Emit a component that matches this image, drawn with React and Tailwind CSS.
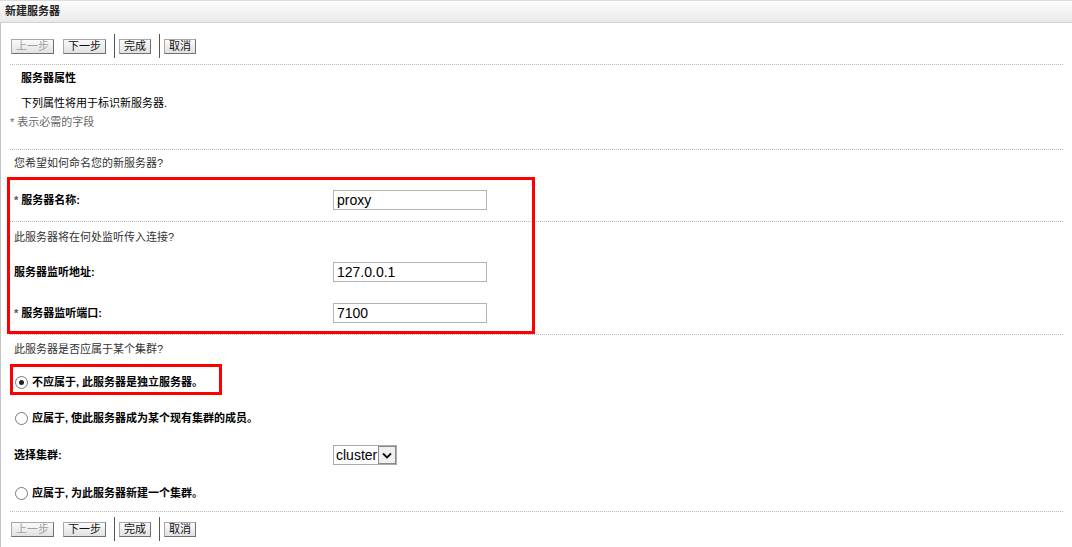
import React from 'react';

const FONT = "font-['Liberation_Sans','Noto_Sans_CJK_SC',sans-serif]";

function Btn({ children, disabled, w }) {
  return (
    <button
      type="button"
      disabled={disabled}
      className={`${w} h-[15px] flex items-center justify-center text-[11px] leading-none border border-[#a8a8a8] border-r-[#707070] border-b-[#707070] bg-gradient-to-b from-[#fafafa] to-[#e2e2e2] ${disabled ? 'text-[#a0a0a0]' : 'text-[#111]'}`}
    >
      {children}
    </button>
  );
}

function Toolbar() {
  return (
    <div className="flex items-center h-[24px] ml-[1px]">
      <Btn w="w-[43px]" disabled>上一步</Btn>
      <div className="ml-[9px]"><Btn w="w-[43px]">下一步</Btn></div>
      <div className="ml-[8px] w-px h-[24px] bg-[#555]" />
      <div className="ml-[4px]"><Btn w="w-[32px]">完成</Btn></div>
      <div className="ml-[8px] w-px h-[24px] bg-[#555]" />
      <div className="ml-[4px]"><Btn w="w-[32px]">取消</Btn></div>
    </div>
  );
}

function Dotted() {
  return <div className="border-t border-dotted border-[#b8b8b8]" />;
}

function TextInput({ value }) {
  return (
    <div className="w-[154px] h-[20px] border border-[#b4b4b4] flex items-center pl-[3px] text-[14px] text-black font-['Liberation_Sans',sans-serif]">
      {value}
    </div>
  );
}

function Radio({ checked, children, h }) {
  return (
    <div className={`${h} flex items-center pl-[5px]`}>
      <span className="w-[13px] h-[13px] rounded-full border border-[#7a7a7a] bg-white flex items-center justify-center">
        {checked && <span className="w-[5px] h-[5px] rounded-full bg-[#222]" />}
      </span>
      <span className="ml-[4px] font-bold text-[11px] text-black">{children}</span>
    </div>
  );
}

export default function App() {
  return (
    <div className={`w-[1072px] h-[547px] bg-white overflow-hidden text-[11px] ${FONT}`}>
      {/* 标题栏 */}
      <div className="h-[23px] border-t border-[#dcdcdc] border-b border-b-[#d2d2d2] bg-gradient-to-b from-[#fdfdfd] to-[#e9e9e9] flex items-center px-[5px] font-bold text-[11px] text-[#222]">
        新建服务器
      </div>

      <div className="relative h-[524px] border-l border-[#c4c4c4]">
        <div className="ml-[9px] mr-[9px]">
          <div className="pt-[11px]"><Toolbar /></div>
          <div className="mt-[6px]"><Dotted /></div>

          {/* 服务器属性 */}
          <div className="h-[26px] flex items-center pl-[11px] font-bold text-black">服务器属性</div>
          <div className="h-[24px] flex items-center pl-[11px] text-black">下列属性将用于标识新服务器.</div>
          <div className="h-[14px] flex items-center text-[#666]">* 表示必需的字段</div>
          <div className="mt-[20px]"><Dotted /></div>

          <div className="h-[26px] flex items-center pl-[4px] text-[#333]">您希望如何命名您的新服务器?</div>
          <div className="grid grid-cols-[319px_1fr] items-center pl-[4px] pt-[14px] pb-[11px]">
            <span className="font-bold text-black"><span className="text-[#555]">*</span> 服务器名称:</span>
            <TextInput value="proxy" />
          </div>
          <Dotted />

          <div className="h-[30px] flex items-center pl-[4px] text-[#333]">此服务器将在何处监听传入连接?</div>
          <div className="grid grid-cols-[319px_1fr] items-center pl-[4px] pt-[10px]">
            <span className="font-bold text-black">服务器监听地址:</span>
            <TextInput value="127.0.0.1" />
          </div>
          <div className="grid grid-cols-[319px_1fr] items-center pl-[4px] pt-[21px] pb-[11px]">
            <span className="font-bold text-black"><span className="text-[#555]">*</span> 服务器监听端口:</span>
            <TextInput value="7100" />
          </div>
          <Dotted />

          <div className="h-[28px] flex items-center pl-[4px] text-[#333]">此服务器是否应属于某个集群?</div>
          <Radio h="h-[38px]" checked>不应属于, 此服务器是独立服务器。</Radio>
          <Radio h="h-[34px]">应属于, 使此服务器成为某个现有集群的成员。</Radio>
          <div className="grid grid-cols-[319px_1fr] items-center pl-[4px] pt-[10px] pb-[10px]">
            <span className="font-bold text-black">选择集群:</span>
            <div className="w-[64px] h-[20px] border border-[#ababab] flex items-center">
              <span className="flex-1 pl-[2px] text-[14px] text-black font-['Liberation_Sans',sans-serif] leading-none">cluster</span>
              <span className="w-[18px] h-[18px] border border-[#8a8a8a] bg-[#efefef] flex items-center justify-center">
                <svg width="10" height="7" viewBox="0 0 10 7">
                  <path d="M1 1.5 L5 5.5 L9 1.5" fill="none" stroke="#111" strokeWidth="1.8" />
                </svg>
              </span>
            </div>
          </div>
          <Radio h="h-[36px]">应属于, 为此服务器新建一个集群。</Radio>
          <Dotted />
          <div className="mt-[5px]"><Toolbar /></div>
        </div>

        {/* 标注红框 */}
        <div className="absolute left-[6px] top-[154px] w-[528px] h-[157px] border-[3px] border-[#ff0000] pointer-events-none" />
        <div className="absolute left-[9px] top-[341px] w-[212px] h-[31px] border-[3px] border-[#ff0000] pointer-events-none" />
      </div>
    </div>
  );
}
